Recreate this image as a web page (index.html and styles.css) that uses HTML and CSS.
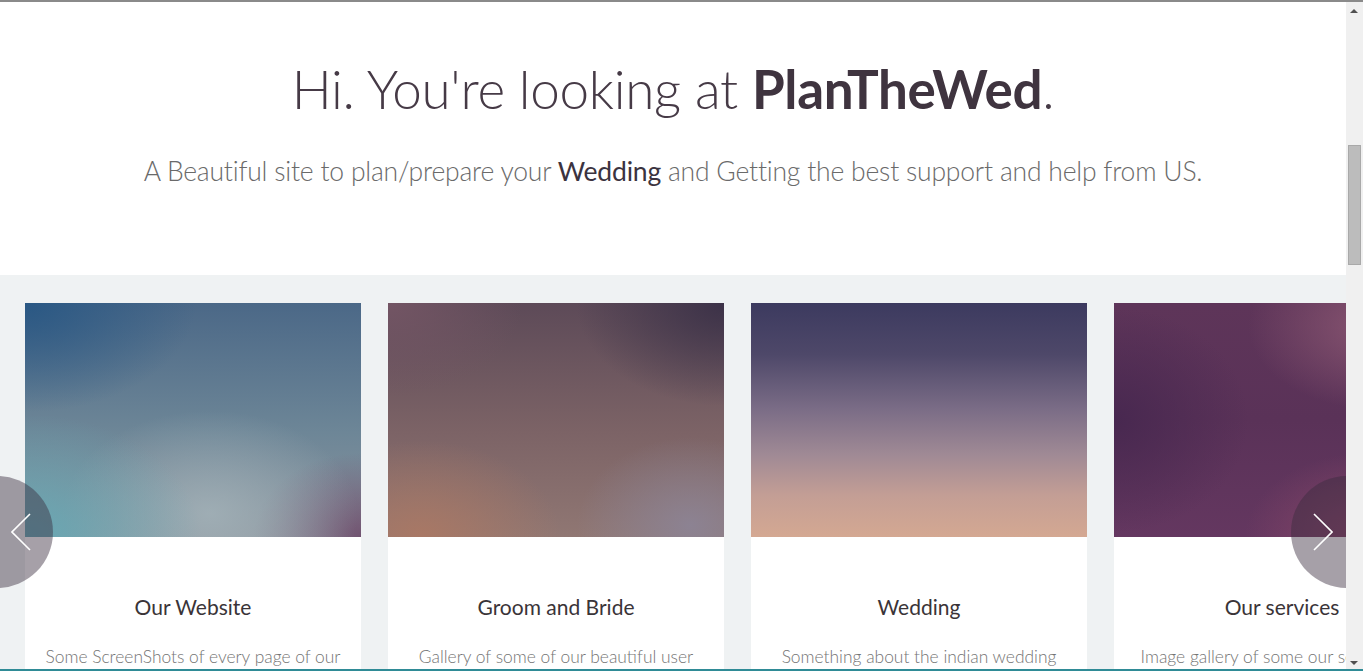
FILE: index.html
```html
<!DOCTYPE html>
<html lang="en">
<head>
<meta charset="utf-8">
<title>PlanTheWed</title>
<link rel="stylesheet" href="styles.css">
</head>
<body>
<div class="page">
  <header class="intro">
    <h1 class="intro-title">Hi. You're looking at <strong>PlanTheWed</strong>.</h1>
    <p class="intro-sub">A Beautiful site to plan/prepare your <strong>Wedding</strong> and Getting the best support and help from US.</p>
  </header>
  <section class="features">
    <article class="card">
      <div class="card-img img-1"></div>
      <div class="card-body">
        <h2 class="card-title">Our Website</h2>
        <p class="card-text">Some ScreenShots of every page of our website and its features.</p>
      </div>
    </article>
    <article class="card">
      <div class="card-img img-2"></div>
      <div class="card-body">
        <h2 class="card-title">Groom and Bride</h2>
        <p class="card-text">Gallery of some of our beautiful user couples and their stories.</p>
      </div>
    </article>
    <article class="card">
      <div class="card-img img-3"></div>
      <div class="card-body">
        <h2 class="card-title">Wedding</h2>
        <p class="card-text">Something about the indian wedding and its traditions.</p>
      </div>
    </article>
    <article class="card">
      <div class="card-img img-4"></div>
      <div class="card-body">
        <h2 class="card-title">Our services</h2>
        <p class="card-text">Image gallery of some our services for you.</p>
      </div>
    </article>
    <button class="arrow arrow-prev" aria-label="Previous">
      <svg width="20" height="38" viewBox="0 0 20 38"><polyline points="19,1 1,19 19,37" fill="none" stroke="#fff" stroke-width="1.6"/></svg>
    </button>
    <button class="arrow arrow-next" aria-label="Next">
      <svg width="20" height="38" viewBox="0 0 20 38"><polyline points="1,1 19,19 1,37" fill="none" stroke="#fff" stroke-width="1.6"/></svg>
    </button>
  </section>
</div>
<div class="scrollbar">
  <span class="sb-up"></span>
  <span class="sb-thumb"></span>
  <span class="sb-down"></span>
</div>
<div class="taskbar"></div>
</body>
</html>
```
FILE: styles.css
```css
html, body {
  margin: 0;
  padding: 0;
  height: 100%;
  overflow: hidden;
}
body {
  font-family: Lato, "Noto Sans", "Liberation Sans", sans-serif;
  background: #ffffff;
  border-top: 2px solid #8a8a8a;
  box-sizing: border-box;
}
.page {
  width: calc(100% - 17px);
}
.intro {
  height: 273px;
  box-sizing: border-box;
  padding-top: 55px;
  text-align: center;
}
.intro-title {
  margin: 0;
  font-size: 53px;
  font-weight: 300;
  color: #463a46;
  line-height: 64px;
  letter-spacing: -0.3px;
}
.intro-title strong {
  font-weight: 700;
  color: #3f343f;
}
.intro-sub {
  margin: 34px 0 0;
  font-size: 26.5px;
  font-weight: 300;
  color: #6a6a6a;
  line-height: 32px;
  letter-spacing: -0.2px;
}
.intro-sub strong {
  font-weight: 400;
  color: #3b3340;
}
.features {
  position: relative;
  background: #eff2f3;
  padding: 28px 0 0 25px;
  display: flex;
  gap: 27px;
  overflow: hidden;
  height: 400px;
}
.card {
  flex: 0 0 336px;
  width: 336px;
  min-width: 0;
  background: #ffffff;
}
.card-img {
  height: 234px;
}
.img-1 {
  background:
    radial-gradient(ellipse 70% 70% at 0% 100%, rgba(100,170,182,0.95), rgba(100,170,182,0) 75%),
    radial-gradient(ellipse 55% 55% at 55% 90%, rgba(165,180,186,0.8), rgba(165,180,186,0) 80%),
    radial-gradient(ellipse 40% 45% at 100% 100%, rgba(112,80,110,0.95), rgba(112,80,110,0) 80%),
    radial-gradient(ellipse 60% 55% at 0% 0%, rgba(42,88,132,1), rgba(42,88,132,0) 85%),
    linear-gradient(180deg, #4b6887 0%, #6d8697 55%, #8c959e 100%);
}
.img-2 {
  background:
    radial-gradient(ellipse 55% 55% at 10% 100%, rgba(170,120,100,0.95), rgba(170,120,100,0) 75%),
    radial-gradient(ellipse 45% 50% at 90% 95%, rgba(140,132,150,0.9), rgba(140,132,150,0) 75%),
    radial-gradient(ellipse 55% 55% at 100% 0%, rgba(60,50,72,1), rgba(60,50,72,0) 80%),
    radial-gradient(ellipse 50% 50% at 0% 0%, rgba(115,85,100,1), rgba(115,85,100,0) 80%),
    linear-gradient(180deg, #5d4a58 0%, #7c6366 55%, #907773 100%);
}
.img-3 {
  background:
    linear-gradient(180deg, #3c3a5f 0%, #4e4869 22%, #7a6c86 45%, #a08a95 65%, #c39e95 82%, #d4a892 100%);
}
.img-4 {
  background:
    radial-gradient(ellipse 50% 45% at 80% 10%, rgba(140,88,115,0.95), rgba(140,88,115,0) 80%),
    radial-gradient(ellipse 45% 45% at 75% 100%, rgba(140,72,105,0.9), rgba(140,72,105,0) 80%),
    radial-gradient(ellipse 50% 60% at 0% 50%, rgba(72,40,80,1), rgba(72,40,80,0) 80%),
    linear-gradient(180deg, #5e3559 0%, #5a3258 50%, #643760 100%);
}
.card-body {
  text-align: center;
  padding: 56px 16px 0;
}
.card-title {
  margin: 0;
  font-size: 21px;
  font-weight: 400;
  color: #3a3438;
  line-height: 28px;
}
.card-text {
  margin: 24px 0 0;
  font-size: 17.4px;
  font-weight: 300;
  color: #747474;
  line-height: 24px;
}
.arrow {
  position: absolute;
  top: 201px;
  width: 112px;
  height: 112px;
  border: 0;
  border-radius: 50%;
  background: rgba(58, 44, 62, 0.45);
  padding: 0;
  display: flex;
  align-items: center;
  cursor: pointer;
}
.arrow-prev {
  left: -59px;
  justify-content: flex-end;
  padding-right: 22px;
}
.arrow-next {
  right: -57px;
  justify-content: flex-start;
  padding-left: 22px;
}
.scrollbar {
  position: fixed;
  top: 2px;
  right: 0;
  bottom: 0;
  width: 17px;
  background: #f0f0f0;
}
.sb-up, .sb-down {
  position: absolute;
  left: 4px;
  width: 0;
  height: 0;
  border-left: 4px solid transparent;
  border-right: 4px solid transparent;
}
.sb-up {
  top: 7px;
  border-bottom: 4px solid #505050;
}
.sb-down {
  bottom: 6px;
  border-top: 4px solid #505050;
}
.sb-thumb {
  position: absolute;
  top: 143px;
  left: 2px;
  width: 11px;
  height: 118px;
  background: #bcbcbc;
  border: 1px solid #a9a9a9;
}
.taskbar {
  position: fixed;
  left: 0;
  right: 0;
  bottom: 0;
  height: 2px;
  background: #2f8b96;
}
```
